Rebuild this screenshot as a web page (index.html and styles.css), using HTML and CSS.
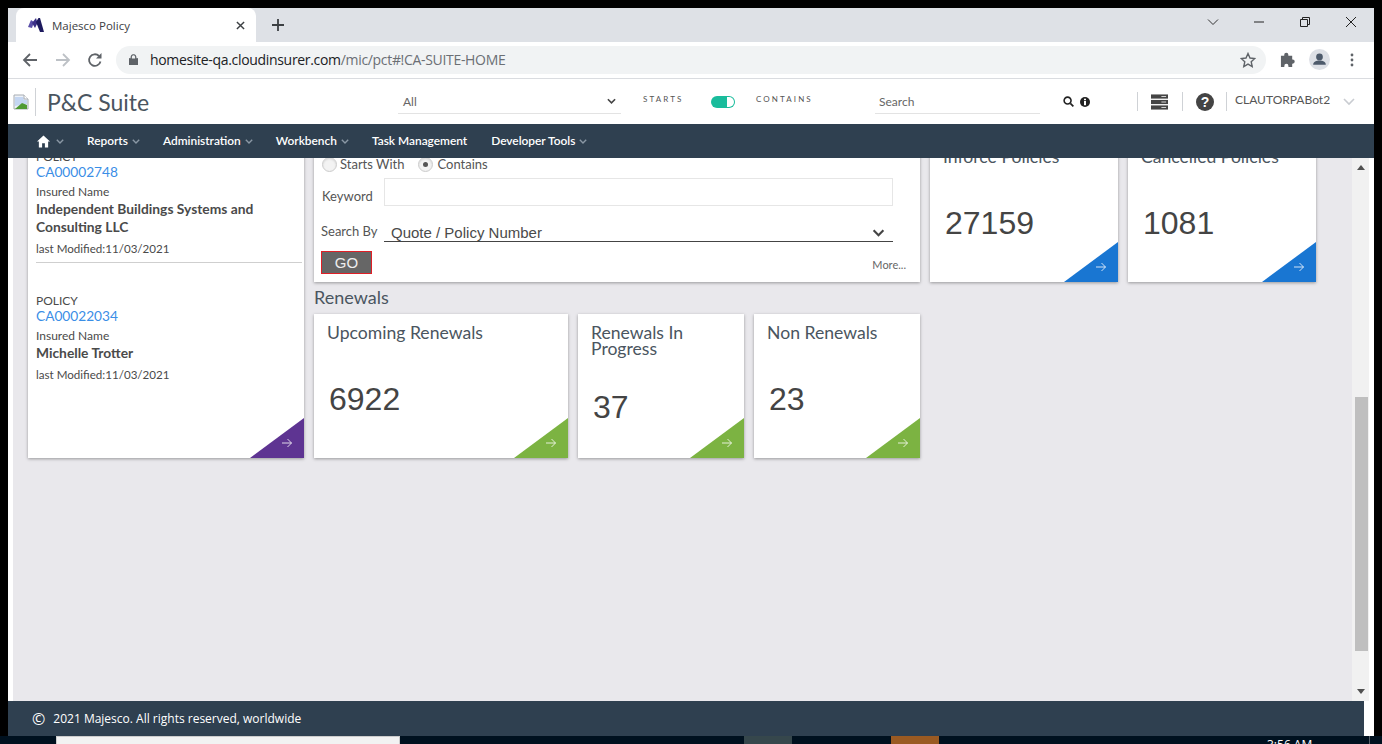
FILE: index.html
```html
<!DOCTYPE html>
<html lang="en">
<head>
<meta charset="utf-8">
<title>Majesco Policy</title>
<link rel="stylesheet" href="styles.css">
</head>
<body>
<div class="window">
  <div class="tabstrip">
    <div class="tab">
      <svg class="favicon" viewBox="0 0 16 14"><path d="M0 9 3 2l3 2-2 6z" fill="#5a4fa8"/><path d="M4 5 8 0l1.500 5L7 10z" fill="#3a2f86"/><path d="M8 4l2.500-4H12l4 14h-4z" fill="#1d1a5e"/></svg>
      <span class="tab-title">Majesco Policy</span>
      <svg class="tab-x" viewBox="0 0 10 10"><path d="M1 1l8 8M9 1l-8 8" stroke="#3c4043" stroke-width="1.600"/></svg>
    </div>
    <svg class="tab-plus" viewBox="0 0 12 12"><path d="M6 0v12M0 6h12" stroke="#3c4043" stroke-width="1.800"/></svg>
    <div class="win-controls">
      <svg class="wc wc-down" viewBox="0 0 12 12"><path d="M1 3.500l5 5 5-5" fill="none" stroke="#333" /></svg>
      <svg class="wc wc-min" viewBox="0 0 12 12"><path d="M1 6h10" stroke="#222" /></svg>
      <svg class="wc wc-max" viewBox="0 0 12 12"><path d="M1.500 3.500h7v7h-7zM3.500 3.500v-2h7v7h-2" fill="none" stroke="#222"/></svg>
      <svg class="wc wc-close" viewBox="0 0 12 12"><path d="M1 1l10 10M11 1L1 11" stroke="#222"/></svg>
    </div>
  </div>

  <div class="toolbar">
    <svg class="tb-ico" viewBox="0 0 16 16"><path d="M15 8H2M8 2 2 8l6 6" fill="none" stroke="#5f6368" stroke-width="1.800"/></svg>
    <svg class="tb-ico tb-fwd" viewBox="0 0 16 16"><path d="M1 8h13M8 2l6 6-6 6" fill="none" stroke="#bdc1c6" stroke-width="1.800"/></svg>
    <svg class="tb-ico tb-reload" viewBox="0 0 16 16"><path d="M13.500 9.500A5.800 5.800 0 1 1 12 4" fill="none" stroke="#5f6368" stroke-width="1.800"/><path d="M14.500 1v5.500H9z" fill="#5f6368"/></svg>
    <div class="omnibox">
      <svg class="lock" viewBox="0 0 10 12"><path d="M0 5h10v7H0zM2.200 5V3.200a2.800 2.800 0 0 1 5.600 0V5" fill="#5f6368" stroke="#5f6368" stroke-width=".8" fill-rule="nonzero"/><path d="M3.200 5V3.200a1.800 1.800 0 0 1 3.600 0V5z" fill="#f1f3f4"/></svg>
      <span class="url"><span class="url-host">homesite-qa.cloudinsurer.com</span>/mic/pct#!CA-SUITE-HOME</span>
      <svg class="star" viewBox="0 0 16 16"><path d="M8 1.500l2 4.500 4.800.500-3.600 3.200 1 4.800L8 12.100l-4.200 2.400 1-4.800L1.200 6.500 6 6z" fill="none" stroke="#5f6368" stroke-width="1.400"/></svg>
    </div>
    <svg class="puzzle" viewBox="0 0 16 16"><path d="M1 4h3.500V3a2.200 2.200 0 1 1 4.400 0v1H13v4h.500a2.200 2.200 0 1 1 0 4.400H13V16H9v-1.200a2.200 2.200 0 1 0-4.400 0V16H1z" fill="#5f6368"/></svg>
    <div class="profile"><svg viewBox="0 0 20 20"><circle cx="10" cy="7.500" r="3.200" fill="#4d5a6b"/><path d="M4 15c0-3 3-4 6-4s6 1 6 4z" fill="#4d5a6b"/></svg></div>
    <svg class="kebab" viewBox="0 0 4 14"><circle cx="2" cy="2" r="1.400" fill="#5f6368"/><circle cx="2" cy="7" r="1.400" fill="#5f6368"/><circle cx="2" cy="12" r="1.400" fill="#5f6368"/></svg>
  </div>

  <header class="app-header">
    <svg class="broken" viewBox="0 0 16 16"><path d="M1 1h10l4 4v10H1z" fill="#eef2f8" stroke="#a8adb3"/><path d="M2 3h8l1 3h3v4L2 12z" fill="#c4d6f2"/><path d="M2 15l7-6 5 2v4z" fill="#4f9a34"/><path d="M11 1v4h4" fill="#fff" stroke="#a8adb3"/></svg>
    <span class="vsep brand-sep"></span>
    <span class="brand">P&amp;C Suite</span>
    <div class="scope">
      <span>All</span>
      <svg class="chev-dark" viewBox="0 0 10 7"><path d="M1 1l4 4 4-4" fill="none" stroke="#444" stroke-width="1.800"/></svg>
    </div>
    <span class="mode mode-starts">STARTS</span>
    <span class="toggle"><span class="knob"></span></span>
    <span class="mode mode-contains">CONTAINS</span>
    <div class="hsearch">Search</div>
    <svg class="mag" viewBox="0 0 12 12"><circle cx="5" cy="5" r="3.800" fill="none" stroke="#222" stroke-width="1.700"/><path d="M8 8l3.300 3.300" stroke="#222" stroke-width="1.900"/></svg>
    <svg class="info" viewBox="0 0 10 10"><circle cx="5" cy="5" r="5" fill="#222"/><rect x="4" y="4" width="2" height="4.200" fill="#fff"/><rect x="4" y="1.700" width="2" height="1.500" fill="#fff"/></svg>
    <span class="vsep sep-a"></span>
    <svg class="stack" viewBox="0 0 18 16"><rect y="0" width="18" height="4.400" fill="#444"/><rect y="5.800" width="18" height="4.400" fill="#444"/><rect y="11.600" width="18" height="4.400" fill="#444"/><path d="M11 2.200h5M11 8h5M11 13.800h5" stroke="#ddd"/></svg>
    <span class="vsep sep-b"></span>
    <span class="help">?</span>
    <span class="vsep sep-c"></span>
    <span class="user">CLAUTORPABot2</span>
    <svg class="chev-user" viewBox="0 0 12 8"><path d="M1 1l5 5 5-5" fill="none" stroke="#c9ccd1" stroke-width="1.600"/></svg>
  </header>

  <nav class="nav">
    <svg class="home" viewBox="0 0 14 13"><path d="M7 0 0 6.500h2V13h3.500V8.500h3V13H12V6.500h2z" fill="#fff"/></svg>
    <svg class="chev" viewBox="0 0 8 5"><path d="M.8.800 4 4 7.200.800" fill="none" stroke="#8b98a5" stroke-width="1.400"/></svg>
    <a class="nav-item">Reports</a>
    <svg class="chev" viewBox="0 0 8 5"><path d="M.8.800 4 4 7.200.800" fill="none" stroke="#8b98a5" stroke-width="1.400"/></svg>
    <a class="nav-item">Administration</a>
    <svg class="chev" viewBox="0 0 8 5"><path d="M.8.800 4 4 7.200.800" fill="none" stroke="#8b98a5" stroke-width="1.400"/></svg>
    <a class="nav-item">Workbench</a>
    <svg class="chev" viewBox="0 0 8 5"><path d="M.8.800 4 4 7.200.800" fill="none" stroke="#8b98a5" stroke-width="1.400"/></svg>
    <a class="nav-item">Task Management</a>
    <a class="nav-item nav-dev">Developer Tools</a>
    <svg class="chev" viewBox="0 0 8 5"><path d="M.8.800 4 4 7.200.800" fill="none" stroke="#8b98a5" stroke-width="1.400"/></svg>
  </nav>

  <div class="main">
    <div class="canvas">
      <div class="dash">
        <section class="card recent">
          <div class="policy">
            <div class="p-type">POLICY</div>
            <a class="p-link">CA00002748</a>
            <div class="p-label">Insured Name</div>
            <div class="p-name">Independent Buildings Systems and Consulting LLC</div>
            <div class="p-date">last Modified:11/03/2021</div>
          </div>
          <div class="policy policy-second">
            <div class="p-type">POLICY</div>
            <a class="p-link">CA00022034</a>
            <div class="p-label">Insured Name</div>
            <div class="p-name">Michelle Trotter</div>
            <div class="p-date">last Modified:11/03/2021</div>
          </div>
          <span class="corner corner-purple"><svg viewBox="0 0 10 10"><path d="M0 5h9.500M5.500 1l4 4-4 4" fill="none" stroke="#fff" stroke-width=".8"/></svg></span>
        </section>

        <section class="card search">
          <div class="radios">
            <span class="radio"></span><span class="radio-label">Starts With</span>
            <span class="radio radio-on"></span><span class="radio-label">Contains</span>
          </div>
          <div class="kw-row">
            <span class="field-label kw-label">Keyword</span>
            <div class="kw-input"></div>
          </div>
          <div class="by-row">
            <span class="field-label by-label">Search By</span>
            <div class="by-select">
              <span>Quote / Policy Number</span>
              <svg viewBox="0 0 14 9"><path d="M1.500 1.500 7 7l5.500-5.500" fill="none" stroke="#444" stroke-width="2.400"/></svg>
            </div>
          </div>
          <div class="go-row">
            <span class="go">GO</span>
            <a class="more">More...</a>
          </div>
        </section>

        <section class="card tile">
          <h3 class="tile-title">Inforce Policies</h3>
          <div class="tile-num">27159</div>
          <span class="corner corner-blue"><svg viewBox="0 0 10 10"><path d="M0 5h9.500M5.500 1l4 4-4 4" fill="none" stroke="#fff" stroke-width=".8"/></svg></span>
        </section>
        <section class="card tile">
          <h3 class="tile-title">Cancelled Policies</h3>
          <div class="tile-num">1081</div>
          <span class="corner corner-blue"><svg viewBox="0 0 10 10"><path d="M0 5h9.500M5.500 1l4 4-4 4" fill="none" stroke="#fff" stroke-width=".8"/></svg></span>
        </section>

        <h2 class="section-title">Renewals</h2>
        <div class="renewals">
          <section class="card tile tile-wide">
            <h3 class="tile-title">Upcoming Renewals</h3>
            <div class="tile-num">6922</div>
            <span class="corner corner-green"><svg viewBox="0 0 10 10"><path d="M0 5h9.500M5.500 1l4 4-4 4" fill="none" stroke="#fff" stroke-width=".8"/></svg></span>
          </section>
          <section class="card tile tile-narrow">
            <h3 class="tile-title">Renewals In Progress</h3>
            <div class="tile-num">37</div>
            <span class="corner corner-green"><svg viewBox="0 0 10 10"><path d="M0 5h9.500M5.500 1l4 4-4 4" fill="none" stroke="#fff" stroke-width=".8"/></svg></span>
          </section>
          <section class="card tile tile-narrow">
            <h3 class="tile-title">Non Renewals</h3>
            <div class="tile-num">23</div>
            <span class="corner corner-green"><svg viewBox="0 0 10 10"><path d="M0 5h9.500M5.500 1l4 4-4 4" fill="none" stroke="#fff" stroke-width=".8"/></svg></span>
          </section>
        </div>
      </div>
    </div>
    <div class="scrollbar">
      <svg class="sb-arrow" viewBox="0 0 8 5"><path d="M4 0l4 5H0z" fill="#505050"/></svg>
      <div class="sb-thumb"></div>
      <svg class="sb-arrow sb-arrow-down" viewBox="0 0 8 5"><path d="M4 5 8 0H0z" fill="#505050"/></svg>
    </div>
  </div>

  <footer class="footer">
    <span class="copy">©</span>
    <span>2021 Majesco. All rights reserved, worldwide</span>
  </footer>
</div>
<div class="taskbar">
  <span class="task task-input"></span>
  <span class="task task-slate"></span>
  <span class="task task-orange"></span>
  <span class="clock">3:56 AM</span>
  <span class="desk-line"></span>
</div>
</body>
</html>
```

FILE: styles.css
```css
* { box-sizing: border-box; }
html, body { margin: 0; height: 744px; overflow: hidden; background: #000; }
body { font-family: "Lato", sans-serif; color: #4a4a4a; padding-top: 8px; }
svg { display: block; flex: none; }

.window { margin-left: 8px; width: 1366px; height: 728px; background: #fff; display: flex; flex-direction: column; overflow: hidden; }

/* browser chrome */
.tabstrip { height: 34px; background: #dee1e6; display: flex; align-items: center; padding-left: 8px; flex: none; }
.tab { width: 240px; height: 34px; background: #fff; border-radius: 8px 8px 0 0; display: flex; align-items: center; padding: 0 11px 0 12px; }
.favicon { width: 16px; height: 14px; }
.tab-title { font: 11.500px "Open Sans", sans-serif; color: #3c4043; margin-left: 8px; flex: 1; }
.tab-x { width: 9px; height: 9px; }
.tab-plus { width: 12px; height: 12px; margin-left: 16px; }
.win-controls { display: flex; align-items: center; margin-left: auto; padding-right: 17px; margin-bottom: 6px; }
.wc { width: 12px; height: 12px; margin-left: 34px; }

.toolbar { height: 37px; flex: none; border-bottom: 1px solid #dadce0; display: flex; align-items: center; padding: 0 0 1px 14px; }
.tb-ico { width: 16px; height: 16px; }
.tb-fwd { margin-left: 17px; }
.tb-reload { margin-left: 16px; }
.omnibox { width: 1150px; height: 28px; margin-left: 13px; border-radius: 14px; background: #f1f3f4; display: flex; align-items: center; padding: 0 10px 0 10px; }
.lock { width: 9px; height: 11px; margin-left: 3px; }
.url { font: 14px "Open Sans", sans-serif; color: #6b6f74; margin-left: 12px; letter-spacing: -.32px; flex: 1; }
.url-host { color: #202124; }
.star { width: 16px; height: 16px; }
.puzzle { width: 15px; height: 15px; margin-left: 14px; }
.profile { width: 21px; height: 21px; border-radius: 50%; background: #dde0e6; margin-left: 14px; }
.kebab { width: 4px; height: 14px; margin-left: 20px; }

/* application header */
.app-header { height: 45px; flex: none; display: flex; align-items: center; padding-left: 5px; }
.broken { width: 16px; height: 16px; }
.vsep { width: 1px; background: #cfd2d6; flex: none; }
.brand-sep { height: 28px; margin-left: 6px; }
.brand { font-size: 23px; color: #4a5560; margin-left: 11px; width: 103px; white-space: nowrap; }
.scope { width: 223px; height: 24px; margin-left: 248px; border-bottom: 1px solid #e3e3e3; display: flex; align-items: center; justify-content: space-between; padding: 0 5px; font-size: 12px; color: #666; }
.chev-dark { width: 9px; height: 7px; }
.mode { font-size: 8px; letter-spacing: 2.100px; color: #555; margin-top: -6px; white-space: nowrap; }
.mode-starts { margin-left: 22px; width: 68px; }
.toggle { width: 24px; height: 12px; border-radius: 6px; background: #1abc9c; display: flex; justify-content: flex-end; padding: 1px; }
.knob { width: 7px; height: 10px; border-radius: 0 5px 5px 0; background: #fff; }
.mode-contains { margin-left: 21px; width: 64px; }
.hsearch { width: 165px; height: 24px; margin-left: 55px; border-bottom: 1px solid #e3e3e3; padding: 4px 4px 0; font-size: 12px; color: #666; }
.mag { width: 11px; height: 11px; margin-left: 23px; }
.info { width: 10px; height: 10px; margin-left: 6px; }
.sep-a { height: 19px; margin-left: 47px; }
.stack { width: 17px; height: 16px; margin-left: 13px; }
.sep-b { height: 19px; margin-left: 14px; }
.help { width: 18px; height: 18px; margin-left: 13px; border-radius: 50%; background: #444; color: #fff; font: 700 14px/18px "Liberation Sans", sans-serif; text-align: center; }
.sep-c { height: 19px; margin-left: 12px; }
.user { font-size: 12px; color: #555; margin-left: 8px; width: 108px; white-space: nowrap; margin-top: -4px; }
.chev-user { width: 12px; height: 8px; }

/* navigation */
.nav { height: 34px; flex: none; background: #2f4050; display: flex; align-items: center; padding: 0 0 2px 29px; }
.home { width: 13px; height: 13px; margin: 2px 6px 0 0; }
.chev { width: 8px; height: 5px; margin: 2px 23px 0 4px; }
.nav-item { font-size: 11.900px; font-weight: 600; color: #fff; white-space: nowrap; }
.nav-dev { margin-left: 24px; }
.home + .chev { margin-left: 0; }

/* main area */
.main { height: 543px; flex: none; display: flex; overflow: hidden; }
.canvas { width: 1339px; margin-left: 5px; background: #e9e8ec; overflow: hidden; padding-left: 15px; }
.dash { margin-top: -20px; display: grid; grid-template-columns: 276px 606px 188px 188px; grid-template-rows: 144px 32px 144px; column-gap: 10px; }
.card { background: #fff; box-shadow: 0 1px 3px rgba(0,0,0,.35); position: relative; overflow: hidden; }

.recent { grid-row: 1 / 4; padding: 12px 2px 0 8px; }
.policy { height: 113px; border-bottom: 1px solid #cfcfcf; }
.policy-second { border-bottom: 0; margin-top: 31px; }
.p-type, .p-label { font-size: 12px; line-height: 14px; }
.p-date { font-size: 11.600px; line-height: 14px; }
.p-link { display: block; font-size: 13.700px; line-height: 16px; color: #3a8ee6; }
.p-label { margin-top: 5px; }
.p-name { font-size: 13.800px; font-weight: 700; line-height: 18px; margin-top: 1px; color: #4a4a4a; width: 230px; }
.p-date { margin-top: 6px; }

.search { padding: 18px 27px 0 8px; }
.radios { display: flex; align-items: center; height: 16px; font-size: 13px; }
.radio { width: 15px; height: 15px; border-radius: 50%; border: 1px solid #ccc; background: #f3f3f3; display: flex; align-items: center; justify-content: center; box-shadow: inset 0 1px 2px rgba(0,0,0,.12); }
.radio-on::after { content: ""; width: 5px; height: 5px; border-radius: 50%; background: #555; }
.radio-label { margin: 0 13px 0 3px; color: #555; }
.radio-on + .radio-label { margin-left: 5px; }
.kw-row { display: flex; align-items: center; margin-top: 6px; }
.field-label { width: 62px; font-size: 13px; color: #555; flex: none; }
.kw-label { margin-top: 8px; }
.kw-input { flex: 1; height: 28px; border: 1px solid #e6e6e6; }
.by-row { display: flex; margin-top: 12px; height: 24px; }
.by-label { margin-left: -1px; width: 63px; line-height: 26px; }
.by-select { flex: 1; border-bottom: 1px solid #444; display: flex; align-items: center; justify-content: space-between; padding: 6px 8px 0 7px; font: 15px "Liberation Sans", sans-serif; color: #4a4a4a; }
.by-select svg { width: 13px; height: 8px; }
.go-row { display: flex; justify-content: space-between; align-items: flex-end; margin: 9px -13px 0 -1px; }
.go { width: 51px; height: 23px; background: #666; border: 1px solid #e01f26; color: #eee; font: 15px/21px "Liberation Sans", sans-serif; text-align: center; }
.more { font-size: 11px; line-height: 14px; color: #666; margin-bottom: 2px; }

.tile { display: flex; flex-direction: column; padding: 11px 13px 1px; }
.tile-title { margin: 0; font-size: 17.600px; font-weight: 400; line-height: 16px; color: #4a5560; }
.tile-num { flex: 1; display: flex; align-items: center; font: 32px "Liberation Sans", sans-serif; color: #444; padding-left: 2px; }
.tile-narrow .tile-title { width: 130px; }
.tile-wide { width: 254px; }
.tile-narrow { width: 166px; }

.section-title { grid-column: 2; margin: 0 0 2px; font-size: 18px; font-weight: 400; line-height: 30px; color: #4a5560; }
.renewals { grid-column: 2; display: flex; gap: 10px; }

.corner { position: absolute; right: 0; bottom: 0; width: 54px; height: 40px; clip-path: polygon(100% 0, 100% 100%, 0 100%); display: flex; align-items: flex-end; justify-content: flex-end; padding: 0 12px 10px 0; }
.corner svg { width: 10px; height: 10px; }
.corner-purple { background: #5e3492; }
.corner-blue { background: #1976d2; }
.corner-green { background: #7cb342; }

.scrollbar { width: 17px; flex: none; background: #f1f1f1; display: flex; flex-direction: column; align-items: center; padding-top: 7px; }
.sb-arrow { width: 8px; height: 5px; }
.sb-thumb { width: 13px; height: 254px; background: #bfbfbf; margin-top: 227px; margin-left: 1px; }
.sb-arrow-down { margin-top: 38px; }

.footer { height: 35px; width: 1356px; flex: none; background: #2f4050; color: #fff; display: flex; align-items: center; padding-left: 24px; font: 12px "Open Sans", sans-serif; }
.copy { font-size: 16px; margin-right: 8px; line-height: 16px; }

.taskbar { height: 8px; background: #00111f; display: flex; overflow: hidden; padding-left: 56px; }
.task { height: 8px; flex: none; }
.task-input { width: 344px; background: #f2f2f2; border: 1px solid #ccc; border-bottom: 0; }
.task-slate { width: 48px; background: #36474c; margin-left: 344px; }
.task-orange { width: 48px; background: #9a5a22; margin-left: 99px; }
.clock { font: 12px/16px "Open Sans", sans-serif; color: #fff; margin: 1px 0 0 328px; white-space: nowrap; width: 102px; }
.desk-line { width: 1px; height: 8px; background: #55606a; }
```
